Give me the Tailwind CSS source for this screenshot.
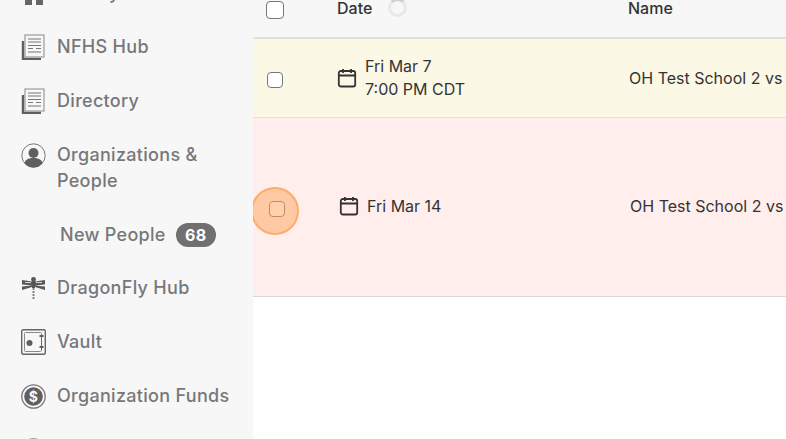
<!DOCTYPE html>
<html lang="en">
<head>
  <meta charset="UTF-8" />
  <title>Events</title>
  <script src="https://cdn.jsdelivr.net/npm/@tailwindcss/browser@4"></script>
</head>
<body class="w-[786px] h-[439px] overflow-hidden bg-white font-['Inter',sans-serif] flex">

  <!-- sidebar -->
  <aside class="w-[253px] h-[439px] shrink-0 overflow-hidden bg-[#f7f7f7] text-[18px] leading-[26px] font-medium tracking-[0.3px] text-[#77777a]">
    <div class="-mt-[20px] pl-[21px] flex flex-col gap-[28px]">
      <div class="flex items-center h-[26px] gap-[11px]">
        <svg class="w-[25px] h-[24px] shrink-0" viewBox="0 0 25 24"><path d="M4 3h7v8H4zM15 3h7v8h-7z" fill="#66666a" transform="translate(0 13)"/></svg>
        <span>Library</span>
      </div>

      <div class="flex items-center h-[26px] gap-[11px]">
        <svg class="w-[25px] h-[26px] shrink-0" viewBox="0 0 25 26" fill="none"><path d="M2 7v18h18" stroke="#5f5f63" stroke-width="2.4"/><rect x="4" y="1" width="19" height="22" fill="#f7f7f7" stroke="#9a9a9d" stroke-width="1.2"/><path d="M7 5h13M7 8h13M7 11.500h13M7 14.500h5M15 14.500h5M7 18h13" stroke="#77777a" stroke-width="1.200"/></svg>
        <span>NFHS Hub</span>
      </div>

      <div class="flex items-center h-[26px] gap-[11px]">
        <svg class="w-[25px] h-[26px] shrink-0" viewBox="0 0 25 26" fill="none"><path d="M2 7v18h18" stroke="#5f5f63" stroke-width="2.4"/><rect x="4" y="1" width="19" height="22" fill="#f7f7f7" stroke="#9a9a9d" stroke-width="1.2"/><path d="M7 5h13M7 8h13M7 11.500h13M7 14.500h5M15 14.500h5M7 18h13" stroke="#77777a" stroke-width="1.200"/></svg>
        <span>Directory</span>
      </div>

      <div class="flex items-start gap-[11px]">
        <svg class="w-[25px] h-[25px] mt-[1px] shrink-0" viewBox="0 0 25 25" fill="none"><circle cx="12.500" cy="12.500" r="11.700" stroke="#77777a" stroke-width="1"/><circle cx="12.500" cy="10" r="5" fill="#5f5f63"/><path d="M3.500 20c1-4 5-5 9-5s8 1 9 5c-2 3-5.500 4.500-9 4.500s-7-1.500-9-4.500z" fill="#5f5f63"/></svg>
        <span class="w-[175px]">Organizations &amp; People</span>
      </div>

      <div class="flex items-center h-[26px] pl-[39px] gap-[10px]">
        <span>New People</span>
        <span class="h-[24px] w-[40px] rounded-full bg-[#707073] text-white text-[16px] font-bold flex items-center justify-center">68</span>
      </div>

      <div class="flex items-center h-[26px] -mt-[1px] gap-[11px]">
        <svg class="w-[25px] h-[25px] shrink-0" viewBox="0 0 25 25" fill="none"><circle cx="12.500" cy="3.500" r="2.400" fill="#55555a"/><path d="M12.500 5v7" stroke="#55555a" stroke-width="3"/><path d="M11 5.500 1 4v4.500l10 1zM14 5.500 24 4v4.500l-10 1zM11 9.500 1 10.500v3.500l10-3zM14 9.500l10 1v3.500l-10-3z" fill="#5a5a5e"/><path d="M4 6.500h6M15 6.500h6" stroke="#f7f7f7" stroke-width="0.800"/><path d="M12.500 12v12" stroke="#77777a" stroke-width="1.800" stroke-dasharray="2 1"/></svg>
        <span>DragonFly Hub</span>
      </div>

      <div class="flex items-center h-[26px] gap-[11px]">
        <svg class="w-[25px] h-[26px] shrink-0" viewBox="0 0 25 26" fill="none"><rect x="0.700" y="0.700" width="23.600" height="24.600" rx="1.500" stroke="#66666a" stroke-width="1.400"/><rect x="3.500" y="3.500" width="17" height="19" rx="1" stroke="#8a8a8d" stroke-width="1"/><circle cx="8.500" cy="14" r="3" fill="#5f5f63"/><path d="M20.500 6v15" stroke="#f7f7f7" stroke-width="3"/><path d="M20.500 6v15" stroke="#66666a" stroke-width="1"/><path d="M18.500 7h4M18.500 18h4" stroke="#5f5f63" stroke-width="2"/></svg>
        <span>Vault</span>
      </div>

      <div class="flex items-center h-[26px] gap-[11px]">
        <svg class="w-[25px] h-[25px] shrink-0" viewBox="0 0 25 25" fill="none"><circle cx="12.500" cy="12.500" r="11.700" stroke="#77777a" stroke-width="1.300"/><circle cx="12.500" cy="12.500" r="9.300" fill="#5f5f63"/><text x="12.500" y="17.500" text-anchor="middle" font-family="Inter, sans-serif" font-size="14" font-weight="700" fill="#f7f7f7">$</text></svg>
        <span>Organization Funds</span>
      </div>

      <div class="flex items-center h-[26px] gap-[11px]">
        <svg class="w-[25px] h-[25px] shrink-0" viewBox="0 0 25 25" fill="none"><circle cx="12.500" cy="12.500" r="11.700" stroke="#77777a" stroke-width="1.300"/></svg>
      </div>
    </div>
  </aside>

  <!-- table -->
  <main class="relative flex-1 overflow-hidden text-[16px] text-[#333335]">
    <div class="h-[39px] bg-[#f7f7f7] border-b-2 border-[#e0e0dc] flex font-medium leading-[16px]">
      <div class="w-[84px] pl-[13px] pt-[1px] shrink-0"><span class="block w-[18px] h-[18px] rounded-[4px] border border-[#77777a] bg-white"></span></div>
      <div class="w-[291px] shrink-0 flex items-start gap-[16px]">
        <span>Date</span>
        <span class="w-[19px] h-[19px] -mt-[2px] rounded-full border-[3px] border-[#e8e8e8] border-t-[#cfcfcf]"></span>
      </div>
      <div>Name</div>
    </div>

    <div class="h-[79px] bg-[#fcf8e6] border-b border-[#ecdfd4] flex items-center">
      <div class="w-[84px] pl-[14px] mt-[4px] shrink-0"><span class="block w-[16px] h-[16px] rounded-[4px] border border-[#77777a] bg-white"></span></div>
      <div class="w-[292px] shrink-0 flex items-center gap-[8px] leading-[23px]">
        <svg class="w-[20px] h-[20px] shrink-0" viewBox="0 0 20 20" fill="none" stroke="#333335" stroke-width="1.800"><rect x="1.800" y="3" width="16.400" height="15.500" rx="2"/><path d="M1.800 7.500h16.400M6 1v4M14 1v4"/></svg>
        <span>Fri Mar 7<br/>7:00 PM CDT</span>
      </div>
      <div class="whitespace-nowrap">OH Test School 2 vs</div>
    </div>

    <div class="h-[179px] bg-[#ffeeeb] border-b border-[#d9d9d9] flex items-center">
      <div class="w-[86px] pl-[16px] mt-[4px] shrink-0"><span class="block w-[16px] h-[16px] rounded-[4px] border border-[#77777a] bg-white"></span></div>
      <div class="w-[291px] shrink-0 flex items-center gap-[8px] -mt-[3px]">
        <svg class="w-[20px] h-[20px] shrink-0" viewBox="0 0 20 20" fill="none" stroke="#333335" stroke-width="1.800"><rect x="1.800" y="3" width="16.400" height="15.500" rx="2"/><path d="M1.800 7.500h16.400M6 1v4M14 1v4"/></svg>
        <span>Fri Mar 14</span>
      </div>
      <div class="whitespace-nowrap -mt-[3px]">OH Test School 2 vs</div>
    </div>

    <!-- click marker -->
    <span class="absolute left-[-2px] top-[187px] w-[48px] h-[48px] rounded-full bg-[#ffa45c]/50 border-2 border-[#ffa45c]/80"></span>
  </main>

</body>
</html>
